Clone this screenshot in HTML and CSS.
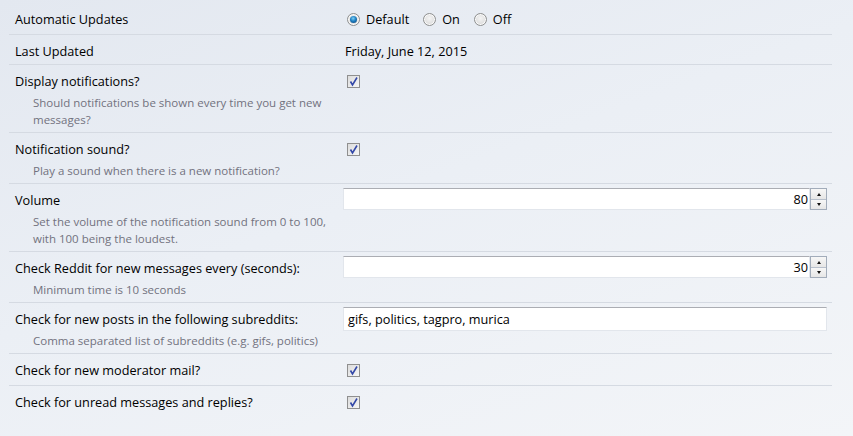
FILE: index.html
```html
<!DOCTYPE html>
<html>
<head>
<meta charset="utf-8">
<link rel="stylesheet" href="styles.css">
</head>
<body>
<div class="settings">
  <div class="setting radio-row">
    <div class="label"><div class="title">Automatic Updates</div></div>
    <div class="control radios">
      <label class="radio-opt"><span class="radio checked"></span>Default</label>
      <label class="radio-opt"><span class="radio"></span>On</label>
      <label class="radio-opt"><span class="radio"></span>Off</label>
    </div>
  </div>
  <div class="setting short">
    <div class="label"><div class="title">Last Updated</div></div>
    <div class="control text-value">Friday, June 12, 2015</div>
  </div>
  <div class="setting">
    <div class="label">
      <div class="title">Display notifications?</div>
      <div class="desc">Should notifications be shown every time you get new messages?</div>
    </div>
    <div class="control"><span class="checkbox"><svg viewBox="0 0 13 13" width="13" height="13"><path d="M3.5 6.5 L5.5 10 L10 2.5" fill="none" stroke="#3348a8" stroke-width="1.6"/></svg></span></div>
  </div>
  <div class="setting">
    <div class="label">
      <div class="title">Notification sound?</div>
      <div class="desc">Play a sound when there is a new notification?</div>
    </div>
    <div class="control"><span class="checkbox"><svg viewBox="0 0 13 13" width="13" height="13"><path d="M3.5 6.5 L5.5 10 L10 2.5" fill="none" stroke="#3348a8" stroke-width="1.6"/></svg></span></div>
  </div>
  <div class="setting">
    <div class="label">
      <div class="title">Volume</div>
      <div class="desc">Set the volume of the notification sound from 0 to 100, with 100 being the loudest.</div>
    </div>
    <div class="control input-ctl">
      <div class="number">
        <div class="field num">80</div>
        <div class="spinner"><span class="up"></span><span class="down"></span></div>
      </div>
    </div>
  </div>
  <div class="setting">
    <div class="label">
      <div class="title">Check Reddit for new messages every (seconds):</div>
      <div class="desc">Minimum time is 10 seconds</div>
    </div>
    <div class="control input-ctl">
      <div class="number">
        <div class="field num">30</div>
        <div class="spinner"><span class="up"></span><span class="down"></span></div>
      </div>
    </div>
  </div>
  <div class="setting">
    <div class="label">
      <div class="title">Check for new posts in the following subreddits:</div>
      <div class="desc">Comma separated list of subreddits (e.g. gifs, politics)</div>
    </div>
    <div class="control input-ctl">
      <div class="field text">gifs, politics, tagpro, murica</div>
    </div>
  </div>
  <div class="setting tall">
    <div class="label"><div class="title">Check for new moderator mail?</div></div>
    <div class="control"><span class="checkbox"><svg viewBox="0 0 13 13" width="13" height="13"><path d="M3.5 6.5 L5.5 10 L10 2.5" fill="none" stroke="#3348a8" stroke-width="1.6"/></svg></span></div>
  </div>
  <div class="setting last">
    <div class="label"><div class="title">Check for unread messages and replies?</div></div>
    <div class="control"><span class="checkbox"><svg viewBox="0 0 13 13" width="13" height="13"><path d="M3.5 6.5 L5.5 10 L10 2.5" fill="none" stroke="#3348a8" stroke-width="1.6"/></svg></span></div>
  </div>
</div>
</body>
</html>
```

FILE: styles.css
```css
html, body {
  margin: 0;
  height: 100%;
}
body {
  background: linear-gradient(160deg, #e3e8f0 0%, #ebeff5 45%, #f3f5f8 100%);
  font-family: "Segoe UI", "Open Sans", "Noto Sans", sans-serif;
  font-size: 12.7px;
  color: #000;
  padding-top: 3px;
  box-sizing: border-box;
}
.settings {
  margin-left: 9px;
  width: 823px;
}
.setting {
  display: grid;
  grid-template-columns: 334px 484px;
  border-bottom: 1px solid #d5dae2;
  padding: 8px 0 4px;
}
.setting.radio-row { padding-bottom: 6px; }
.setting.tall { padding-bottom: 6px; }
.setting.last { border-bottom: none; }
.label { padding-left: 6px; }
.title { line-height: 17px; }
.desc {
  margin-top: 4px;
  padding-left: 18px;
  padding-right: 0;
  line-height: 17px;
  font-size: 11.5px;
  color: #72727e;
}
.control {
  display: flex;
  align-items: flex-start;
  line-height: 17px;
}
.text-value { padding-left: 2px; }
.radio-opt {
  display: flex;
  align-items: center;
  margin-right: 10px;
}
.radio {
  width: 11px;
  height: 11px;
  border-radius: 50%;
  border: 1px solid #8e8f8f;
  background: radial-gradient(circle at 50% 40%, #f4f4f4 0%, #e0e0e0 60%, #cfcfcf 100%);
  margin: 0 6px 0 4px;
  box-sizing: content-box;
  position: relative;
  box-shadow: inset 0 0 0 1px #fafafa;
}
.radio.checked::after {
  content: "";
  position: absolute;
  left: 2px;
  top: 2px;
  width: 7px;
  height: 7px;
  border-radius: 50%;
  background: radial-gradient(circle at 45% 35%, #7fd0f5 0%, #1e7fc2 45%, #0d3f73 100%);
}
.checkbox {
  display: block;
  width: 11px;
  height: 11px;
  margin: 2px 0 0 4px;
  border: 1px solid #8f8f8f;
  background: linear-gradient(135deg, #dcdcdc, #f6f6f6);
  position: relative;
}
.checkbox svg {
  position: absolute;
  left: -1px;
  top: -1px;
}
.input-ctl {
  margin-top: -4px;
}
.number {
  display: flex;
  width: 484px;
}
.field {
  box-sizing: border-box;
  background: #fff;
  border: 1px solid #e2e6ec;
  border-top-color: #abadb3;
  height: 22px;
  line-height: 20px;
}
.field.num {
  flex: 1;
  text-align: right;
  padding-right: 1px;
}
.field.text {
  width: 484px;
  height: 24px;
  line-height: 22px;
  padding-left: 4px;
}
.spinner {
  width: 17px;
  height: 22px;
  box-sizing: border-box;
  border: 1px solid #a2acba;
  display: flex;
  flex-direction: column;
}
.spinner span {
  flex: 1;
  position: relative;
  background: linear-gradient(#f7f7f7, #e6e6e6);
}
.spinner .up { border-bottom: 1px solid #b8c0cc; }
.spinner span::after {
  content: "";
  position: absolute;
  left: 6px;
  top: 4px;
  border-left: 2px solid transparent;
  border-right: 2px solid transparent;
}
.spinner .up::after { border-bottom: 3px solid #111; }
.spinner .down::after { border-top: 3px solid #111; top: 3px; }
```
